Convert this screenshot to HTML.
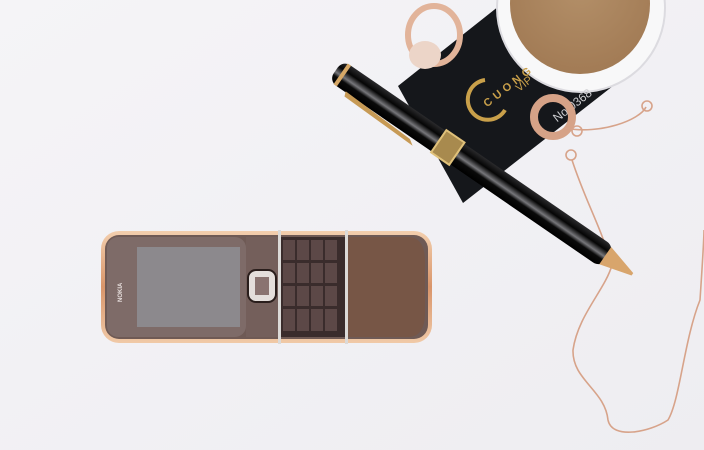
<!DOCTYPE html>
<html><head><meta charset="utf-8"><style>
html,body{margin:0;padding:0;background:#f3f2f5;}
svg{display:block}
</style></head><body>
<svg width="704" height="450" viewBox="0 0 704 450" xmlns="http://www.w3.org/2000/svg">
<defs>
<linearGradient id="bg" x1="0" y1="0" x2="1" y2="1"><stop offset="0" stop-color="#f5f4f7"/><stop offset="1" stop-color="#eeedf1"/></linearGradient>
<linearGradient id="gold" x1="0" y1="0" x2="0" y2="1"><stop offset="0" stop-color="#f3cfae"/><stop offset="0.5" stop-color="#d9956a"/><stop offset="1" stop-color="#f0c9a7"/></linearGradient>
<linearGradient id="pen" x1="0" y1="0" x2="0" y2="1"><stop offset="0" stop-color="#2a2a2c"/><stop offset="0.3" stop-color="#050505"/><stop offset="0.55" stop-color="#77777b"/><stop offset="0.7" stop-color="#0a0a0a"/><stop offset="1" stop-color="#000"/></linearGradient>
<radialGradient id="coffee" cx="0.5" cy="0.4" r="0.6"><stop offset="0" stop-color="#b38f68"/><stop offset="1" stop-color="#a27b55"/></radialGradient>
</defs>
<rect width="704" height="450" fill="url(#bg)"/>
<polygon points="398,86 499,6 636,68 463,203" fill="#15171b"/>
<circle cx="581" cy="8" r="84" fill="#f8f8f9"/>
<circle cx="581" cy="8" r="84" fill="none" stroke="#dcdbe0" stroke-width="2"/>
<circle cx="580" cy="4" r="70" fill="url(#coffee)"/>
<path d="M485,80 A20,20 0 1 0 505,110" fill="none" stroke="#c9a04a" stroke-width="4"/>
<text x="480" y="103" font-family="Liberation Sans, sans-serif" font-size="11" font-weight="bold" fill="#c9a04a" transform="rotate(-38 490 95)" letter-spacing="4">CUONG</text>
<text x="515" y="90" font-family="Liberation Sans, sans-serif" font-size="11" fill="#c9a04a" transform="rotate(-38 520 85)">VIP</text>
<text x="550" y="118" font-family="Liberation Sans, sans-serif" font-size="12" fill="#cfcfd2" transform="rotate(-38 560 110)">No 0368</text>
<ellipse cx="434" cy="35" rx="26" ry="29" fill="none" stroke="#e2b49a" stroke-width="6"/>
<ellipse cx="425" cy="55" rx="16" ry="14" fill="#ecd5c8"/>
<circle cx="553" cy="117" r="19" fill="none" stroke="#d6a287" stroke-width="8"/>
<g fill="none" stroke="#d7a38a" stroke-width="1.6">
<path d="M565,128 C600,135 640,120 646,107"/>
<circle cx="647" cy="106" r="5"/>
<circle cx="577" cy="131" r="5"/>
<circle cx="571" cy="155" r="5"/>
<path d="M572,160 C585,200 600,225 612,265 C605,290 578,315 573,350 C572,380 605,390 608,420 C612,440 650,432 668,420 C680,400 684,340 700,300 C702,270 704,240 704,230"/>
</g>
<g transform="translate(336,70) rotate(34.5)">
<rect x="0" y="-12" width="330" height="25" rx="9" fill="url(#pen)"/>
<rect x="6" y="-12" width="4" height="25" fill="#d6a867"/>
<path d="M20,12 L100,15 L106,19 L22,17 Z" fill="#c79a55"/>
<rect x="125" y="-13" width="22" height="27" fill="#a88a4e"/>
<path d="M125,-13 h22 v27 h-22 z" fill="none" stroke="#e0c17a" stroke-width="2"/>
<path d="M327,-10 L360,-1 L360,2 L327,11 Z" fill="#d8a56c"/>
</g>
<rect x="101" y="231" width="331" height="112" rx="18" fill="url(#gold)"/>
<rect x="105" y="235" width="323" height="104" rx="14" fill="#6f5a55"/>
<rect x="107" y="237" width="139" height="100" rx="11" fill="#7e6b68"/>
<rect x="137" y="247" width="103" height="80" fill="#8c898d"/>
<text x="0" y="0" font-family="Liberation Sans, sans-serif" font-size="6" font-weight="bold" fill="#e8e0de" transform="translate(122,302) rotate(-90)">NOKIA</text>
<rect x="246" y="237" width="33" height="100" fill="#745f5b"/>
<rect x="248" y="270" width="28" height="32" rx="8" fill="#e4dedb" stroke="#2a1e1c" stroke-width="2"/>
<rect x="255" y="277" width="14" height="18" fill="#8a7370"/>
<rect x="280" y="237" width="66" height="100" fill="#3a2c2c"/>
<g fill="#5c4847">
<rect x="283" y="240" width="12" height="20"/><rect x="297" y="240" width="12" height="20"/><rect x="311" y="240" width="12" height="20"/><rect x="325" y="240" width="12" height="20"/>
<rect x="283" y="263" width="12" height="20"/><rect x="297" y="263" width="12" height="20"/><rect x="311" y="263" width="12" height="20"/><rect x="325" y="263" width="12" height="20"/>
<rect x="283" y="286" width="12" height="20"/><rect x="297" y="286" width="12" height="20"/><rect x="311" y="286" width="12" height="20"/><rect x="325" y="286" width="12" height="20"/>
<rect x="283" y="309" width="12" height="22"/><rect x="297" y="309" width="12" height="22"/><rect x="311" y="309" width="12" height="22"/><rect x="325" y="309" width="12" height="22"/>
</g>
<rect x="278" y="230" width="3" height="114" fill="#dcdad8"/>
<rect x="345" y="230" width="3" height="114" fill="#dcdad8"/>
<path d="M348,237 H408 Q425,237 425,262 V312 Q425,337 408,337 H348 Z" fill="#775646"/>
</svg>
</body></html>
